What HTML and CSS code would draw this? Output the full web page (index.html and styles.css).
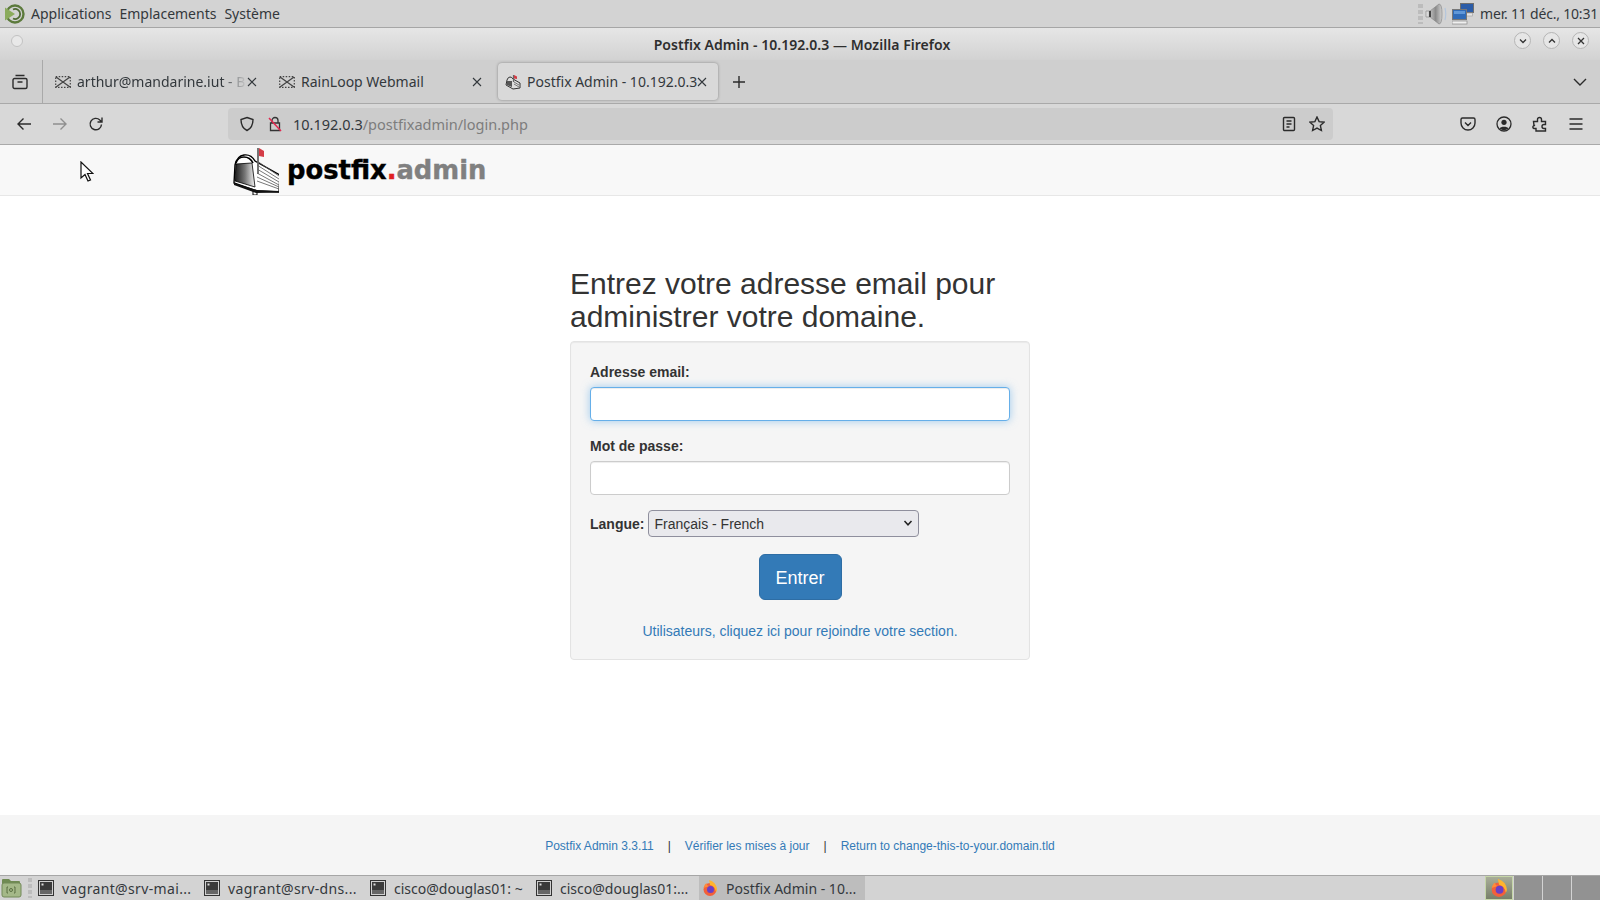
FILE: index.html
```html
<!DOCTYPE html>
<html lang="fr">
<head>
  <meta charset="utf-8">
  <title>Postfix Admin - 10.192.0.3</title>
  <link rel="stylesheet" href="styles.css">
</head>
<body>
  <div class="desktop">
    <!-- Top panel -->
    <div class="top-panel">
      <svg class="mate-logo" width="24" height="24" viewBox="0 0 24 24">
        <circle cx="12" cy="12" r="8.500" fill="none" stroke="#5c7a3c" stroke-width="2.400"/>
        <path d="M10 7.500a5 5 0 1 1 0 9" fill="none" stroke="#4f6a34" stroke-width="1.800"/>
        <path d="M2 5.500 12 12 2 18.500z" fill="#8bab5c"/>
      </svg>
      <span class="panel-menu">Applications</span>
      <span class="panel-menu">Emplacements</span>
      <span class="panel-menu">Système</span>
      <div class="panel-tray">
        <span class="tray-grip"></span>
        <svg width="22" height="24" viewBox="0 0 22 24">
          <defs>
            <linearGradient id="cone" x1="0" x2="1" y1="0" y2="0">
              <stop offset="0" stop-color="#e8e8e8"/>
              <stop offset="0.600" stop-color="#8a8a8a"/>
              <stop offset="1" stop-color="#d0d0d0"/>
            </linearGradient>
          </defs>
          <path d="M1 9h4l9-7q3 0 3 10t-3 10l-9-7H1z" fill="url(#cone)" stroke="#8a8a8a" stroke-width=".7"/>
          <path d="M5 9v6" stroke="#444" stroke-width="2"/>
          <path d="M20 6q1.500 6 0 12" fill="none" stroke="#b4c6dc" stroke-width="1.200"/>
        </svg>
        <svg class="tray-net" width="22" height="24" viewBox="0 0 22 24">
          <rect x="8.500" y="1.500" width="13" height="9" fill="#2c5da8" stroke="#6f6f6f"/>
          <rect x="9.500" y="11" width="11" height="3" fill="#e6e6e6" stroke="#999" stroke-width=".6"/>
          <rect x=".5" y="7.500" width="14" height="10" fill="#2f6bb8" stroke="#777"/>
          <path d="M2 9h11v3H2z" fill="#5f97d8"/>
          <rect x="0" y="19" width="15" height="3" fill="#f0f0f0" stroke="#888" stroke-width=".7"/>
        </svg>
        <span class="panel-clock">mer. 11 déc., 10:31</span>
      </div>
    </div>

    <!-- Window title -->
    <div class="title-bar">
      <span class="win-dot"></span>
      <span class="win-title">Postfix Admin - 10.192.0.3 — Mozilla Firefox</span>
      <div class="win-buttons">
        <span class="win-btn"><svg width="10" height="10" viewBox="0 0 10 10"><path d="M2 3.500 5 6.500 8 3.500" class="win-ico"/></svg></span>
        <span class="win-btn"><svg width="10" height="10" viewBox="0 0 10 10"><path d="M2 6.500 5 3.500 8 6.500" class="win-ico"/></svg></span>
        <span class="win-btn"><svg width="10" height="10" viewBox="0 0 10 10"><path d="M2 2 8 8M8 2 2 8" class="win-ico"/></svg></span>
      </div>
    </div>

    <!-- Tabs -->
    <div class="tab-bar">
      <div class="tab-view">
        <svg width="16" height="16" viewBox="0 0 16 16" class="ico"><path d="M3.500 1.500h9M1 6a1.500 1.500 0 0 1 1.500-1.500h11A1.500 1.500 0 0 1 15 6v7a1.500 1.500 0 0 1-1.500 1.500h-11A1.500 1.500 0 0 1 1 13zM5.500 8h5"/></svg>
      </div>
      <div class="tab tab-one">
        <svg class="tab-fav" width="16" height="16" viewBox="0 0 16 16"><path d="M1 3 15 13M15 3 1 13" stroke="#444" stroke-width="1.300" fill="none"/><rect x=".7" y="2.700" width="14.600" height="10.600" fill="none" stroke="#444" stroke-width="1.200" stroke-dasharray="1.500 1.500"/></svg>
        <span class="tab-label tab-fade">arthur@mandarine.iut - B</span>
        <svg class="tab-x" width="10" height="10" viewBox="0 0 10 10"><path d="M1 1 9 9M9 1 1 9"/></svg>
      </div>
      <div class="tab tab-two">
        <svg class="tab-fav" width="16" height="16" viewBox="0 0 16 16"><path d="M1 3 15 13M15 3 1 13" stroke="#444" stroke-width="1.300" fill="none"/><rect x=".7" y="2.700" width="14.600" height="10.600" fill="none" stroke="#444" stroke-width="1.200" stroke-dasharray="1.500 1.500"/></svg>
        <span class="tab-label">RainLoop Webmail</span>
        <svg class="tab-x" width="10" height="10" viewBox="0 0 10 10"><path d="M1 1 9 9M9 1 1 9"/></svg>
      </div>
      <div class="tab tab-active">
        <svg class="tab-fav" width="16" height="16" viewBox="0 0 16 16">
          <path d="M1 11 2 6q1-3 3-3t3 2l7 4v5l-7 1z" fill="#ddd" stroke="#333"/>
          <path d="M2 7h5v6l-5-2z" fill="#555"/>
          <path d="M8.500 1v7" stroke="#666" stroke-width="1.200"/>
          <path d="M9 1l3 1.500V5L9 4.500z" fill="#d43c46"/>
          <path d="M9 8l5 3M9 10l5 3" stroke="#777"/>
        </svg>
        <span class="tab-label">Postfix Admin - 10.192.0.3</span>
        <svg class="tab-x" width="10" height="10" viewBox="0 0 10 10"><path d="M1 1 9 9M9 1 1 9"/></svg>
      </div>
      <svg class="tab-new ico" width="16" height="16" viewBox="0 0 16 16"><path d="M8 2v12M2 8h12"/></svg>
      <svg class="tab-list ico" width="16" height="16" viewBox="0 0 16 16"><path d="M2 5l6 6 6-6"/></svg>
    </div>

    <!-- Nav toolbar -->
    <div class="nav-bar">
      <svg class="nav-btn ico" width="16" height="16" viewBox="0 0 16 16"><path d="M15 8H2M7.500 2.500 2 8l5.500 5.500"/></svg>
      <svg class="nav-btn ico ico-off" width="16" height="16" viewBox="0 0 16 16"><path d="M1 8h13M8.500 2.500 14 8l-5.500 5.500"/></svg>
      <svg class="nav-btn ico" width="16" height="16" viewBox="0 0 16 16"><path d="M13.500 8.500A5.700 5.700 0 1 1 11.800 4L14 6M14 1.500V6H9.500"/></svg>
      <div class="url-bar">
        <svg class="url-shield ico" width="16" height="16" viewBox="0 0 16 16"><path d="M8 1.500 14 3.500c0 5.500-1.800 9-6 11-4.200-2-6-5.500-6-11z"/></svg>
        <svg class="url-lock" width="16" height="16" viewBox="0 0 16 16">
          <path d="M5 7V4.500a3 3 0 0 1 6 0V7M3.500 7h9v7.500h-9z" fill="none" stroke="#333" stroke-width="1.300"/>
          <path d="M2 2 14 15" stroke="#e22850" stroke-width="1.500"/>
        </svg>
        <span class="url-text"><span class="url-host">10.192.0.3</span>/postfixadmin/login.php</span>
        <svg class="url-reader ico" width="16" height="16" viewBox="0 0 16 16"><path d="M3.500 1.500h9a1 1 0 0 1 1 1v11a1 1 0 0 1-1 1h-9a1 1 0 0 1-1-1v-11a1 1 0 0 1 1-1zM5.500 5h5M5.500 8h5M5.500 11h3"/></svg>
        <svg class="url-star ico" width="16" height="16" viewBox="0 0 16 16"><path d="M8 1l2.100 4.600 5 .6-3.700 3.400 1 4.900L8 12.100l-4.400 2.400 1-4.900L.9 6.200l5-.6z"/></svg>
      </div>
      <div class="nav-right">
        <svg class="ico" width="16" height="16" viewBox="0 0 16 16"><path d="M2.500 2h11A1.500 1.500 0 0 1 15 3.500V7a7 7 0 0 1-14 0V3.500A1.500 1.500 0 0 1 2.500 2zM5 6.500 8 9.500l3-3"/></svg>
        <svg width="16" height="16" viewBox="0 0 16 16"><circle cx="8" cy="8" r="7" fill="none" stroke="#2b2b2b" stroke-width="1.300"/><circle cx="8" cy="6.300" r="2.600" fill="#2b2b2b"/><path d="M3.500 12.500c1-2.500 8-2.500 9 0q-4.500 3.500-9 0z" fill="#2b2b2b"/></svg>
        <svg class="ico" width="16" height="16" viewBox="0 0 16 16"><path d="M1.500 5.500h4V3.500a2 2 0 0 1 4 0v2h4v3h-1.500a2 2 0 0 0 0 4h1.500v2.500H4v-2.500H2a1.500 1.500 0 0 1 1-3H2z"/></svg>
        <svg class="ico" width="16" height="16" viewBox="0 0 16 16"><path d="M1.500 3h13M1.500 8h13M1.500 13h13"/></svg>
      </div>
    </div>

    <!-- Page content -->
    <div class="page">
      <nav class="site-nav">
        <a class="brand">
          <svg class="brand-box" width="50" height="50" viewBox="5 2 50 50">
            <defs>
              <linearGradient id="boxfade" x1="0" x2="1" y1="0" y2="0">
                <stop offset="0" stop-color="#1c1c1c"/>
                <stop offset="0.500" stop-color="#777"/>
                <stop offset="1" stop-color="#f4f4f4"/>
              </linearGradient>
            </defs>
            <path d="M29 44h4v8h-4z" fill="#fff" stroke="#000"/>
            <path d="M10 40 11 22Q13 13 20 12 27 11 31 18L56 32 55 49 33 48z" fill="#fff" stroke="#000" stroke-width="1.400"/>
            <path d="M12 21 28 20 31 44 11 38z" fill="url(#boxfade)" stroke="#000" stroke-width=".8"/>
            <path d="M12 20Q14 14 20 14 26 14 29 20" fill="none" stroke="#000" stroke-width="1.600"/>
            <path d="M33 18 55 33M33 22 55 36M33 26 55 39M33 30 55 42M33 34 55 44M33 38 55 46" stroke="#555" stroke-width=".8"/>
            <path d="M10 40 33 47 55 48 55 49.500 32 50 10 42z" fill="#111"/>
            <path d="M34 5V31" stroke="#666" stroke-width="1.800"/>
            <path d="M35 5 40 8V14L35 13z" fill="#d43c46"/>
          </svg>
          <span class="brand-text">postfix<span class="brand-dot">.</span><span class="brand-admin">admin</span></span>
        </a>
      </nav>

      <main class="login">
        <h2>Entrez votre adresse email pour administrer votre domaine.</h2>
        <form class="well">
          <label class="field-label" for="email">Adresse email:</label>
          <input class="field field-focus" id="email" type="text">
          <label class="field-label" for="pass">Mot de passe:</label>
          <input class="field" id="pass" type="password">
          <div class="lang-row">
            <label for="lang">Langue:</label>
            <div class="lang-select">
              <select id="lang">
                <option>Français - French</option>
              </select>
              <svg class="lang-arrow" width="10" height="10" viewBox="0 0 10 10"><path d="M1.500 3 5 6.800 8.500 3"/></svg>
            </div>
          </div>
          <div class="submit-row"><button type="button" class="btn-enter">Entrer</button></div>
          <div class="user-link"><a href="#">Utilisateurs, cliquez ici pour rejoindre votre section.</a></div>
        </form>
      </main>

      <footer class="site-footer">
        <a href="#">Postfix Admin 3.3.11</a>
        <span class="sep">|</span>
        <a href="#">Vérifier les mises à jour</a>
        <span class="sep">|</span>
        <a href="#">Return to change-this-to-your.domain.tld</a>
      </footer>
    </div>

    <!-- Bottom panel -->
    <div class="task-bar">
      <svg class="task-folder" width="22" height="22" viewBox="0 0 22 22">
        <path d="M2 3q0-1 1-1h6l2 2h8q1 0 1 1v2H2z" fill="#6f8a52"/>
        <rect x="2" y="6" width="19" height="14" rx="2" fill="#a4b888" stroke="#738a58"/>
        <path d="M8 10h-1v6h1M14 10h1v6h-1" fill="none" stroke="#5a6f42"/>
        <circle cx="11" cy="13" r="1.500" fill="none" stroke="#5a6f42"/>
      </svg>
      <span class="task-grip"></span>
      <div class="task-item task-wide">
        <svg class="term-ico" width="16" height="16" viewBox="0 0 16 16"><rect x=".5" y=".5" width="15" height="15" fill="#d0d0d0" stroke="#333"/><rect x="2" y="2" width="12" height="12" fill="#3a3a3a"/><path d="M3.500 3.500h2v2h-2z" fill="#ddd"/><path d="M2 10h12v4H2z" fill="#666"/></svg>
        <span>vagrant@srv-mai...</span>
      </div>
      <div class="task-item task-wide">
        <svg class="term-ico" width="16" height="16" viewBox="0 0 16 16"><rect x=".5" y=".5" width="15" height="15" fill="#d0d0d0" stroke="#333"/><rect x="2" y="2" width="12" height="12" fill="#3a3a3a"/><path d="M3.500 3.500h2v2h-2z" fill="#ddd"/><path d="M2 10h12v4H2z" fill="#666"/></svg>
        <span>vagrant@srv-dns...</span>
      </div>
      <div class="task-item">
        <svg class="term-ico" width="16" height="16" viewBox="0 0 16 16"><rect x=".5" y=".5" width="15" height="15" fill="#d0d0d0" stroke="#333"/><rect x="2" y="2" width="12" height="12" fill="#3a3a3a"/><path d="M3.500 3.500h2v2h-2z" fill="#ddd"/><path d="M2 10h12v4H2z" fill="#666"/></svg>
        <span>cisco@douglas01: ~</span>
      </div>
      <div class="task-item task-short">
        <svg class="term-ico" width="16" height="16" viewBox="0 0 16 16"><rect x=".5" y=".5" width="15" height="15" fill="#d0d0d0" stroke="#333"/><rect x="2" y="2" width="12" height="12" fill="#3a3a3a"/><path d="M3.500 3.500h2v2h-2z" fill="#ddd"/><path d="M2 10h12v4H2z" fill="#666"/></svg>
        <span>cisco@douglas01:...</span>
      </div>
      <div class="task-item task-active">
        <svg class="term-ico" width="16" height="16" viewBox="0 0 16 16">
          <circle cx="8" cy="9.500" r="6.500" fill="#f2603a"/>
          <path d="M7 0q7 2 8 9 0 2-1 3-1-6-6-7z" fill="#ffb52e"/>
          <path d="M1.500 8q1-4 3-5 0 3 3 3z" fill="#ff8a3a"/>
          <circle cx="8.500" cy="9.500" r="3.500" fill="#6a3fc4"/>
        </svg>
        <span>Postfix Admin - 10...</span>
      </div>
      <div class="workspaces">
        <div class="ws ws-on">
          <svg width="18" height="18" viewBox="0 0 16 16">
            <circle cx="8" cy="9.500" r="6.500" fill="#f2603a"/>
            <path d="M7 0q7 2 8 9 0 2-1 3-1-6-6-7z" fill="#ffb52e"/>
            <path d="M1.500 8q1-4 3-5 0 3 3 3z" fill="#ff8a3a"/>
            <circle cx="8.500" cy="9.500" r="3.500" fill="#6a3fc4"/>
          </svg>
        </div>
        <div class="ws"></div>
        <div class="ws"></div>
        <div class="ws"></div>
      </div>
    </div>

    <!-- Mouse pointer, on top of the page -->
    <svg class="pointer" width="14" height="22" viewBox="0 0 14 22">
      <path d="M1 1v16l4-3.500 3 6.500 2.500-1-3-6.500H13z" fill="#fff" stroke="#111" stroke-width="1.200"/>
    </svg>
  </div>
</body>
</html>
```

FILE: styles.css
```css
/* Basic reset */
* {
  box-sizing: border-box;
  margin: 0;
  padding: 0;
}

body {
  width: 1600px;
  height: 900px;
  overflow: hidden;
  font-family: "Noto Sans", sans-serif;
  color: #2e2e2e;
}

.desktop {
  position: relative;
  display: flex;
  flex-direction: column;
  height: 900px;
}

.ico {
  fill: none;
  stroke: #2b2b2b;
  stroke-width: 1.4;
}

.ico-off {
  stroke: #8f8f8f;
}

/* Top panel */
.top-panel {
  height: 28px;
  flex: none;
  display: flex;
  align-items: center;
  background-color: #d3d3d3;
  border-bottom: 1px solid #a6a6a6;
  font-size: 14px;
  padding-left: 3px;
}

.mate-logo {
  margin-right: 4px;
}

.panel-menu {
  margin-right: 8px;
  color: #33383c;
}

.panel-tray {
  margin-left: auto;
  display: flex;
  align-items: center;
  padding-right: 2px;
}

.tray-grip {
  width: 5px;
  height: 20px;
  margin-right: 2px;
  background: repeating-linear-gradient(#bcbcbc 0 4px, #d3d3d3 4px 6px);
}

.tray-net {
  margin-left: 5px;
  margin-right: 6px;
}

.panel-clock {
  color: #33383c;
  letter-spacing: -0.2px;
}

/* Window title */
.title-bar {
  height: 32px;
  flex: none;
  position: relative;
  display: flex;
  align-items: center;
  justify-content: center;
  padding-left: 4px;
  background: linear-gradient(#e6e6e6, #d2d2d2);
}

.win-title {
  font-size: 14px;
  font-weight: 600;
  letter-spacing: 0.05px;
  color: #2e2e2e;
}

.win-dot {
  position: absolute;
  left: 11px;
  top: 7px;
  width: 12px;
  height: 12px;
  border-radius: 50%;
  background-color: #e8e8e8;
  border: 1px solid #c2c2c2;
}

.win-buttons {
  position: absolute;
  right: 11px;
  top: 4px;
  display: flex;
  gap: 12px;
}

.win-btn {
  width: 17px;
  height: 17px;
  border-radius: 50%;
  border: 1px solid #b5b5b5;
  background-color: #e6e6e6;
  display: flex;
  align-items: center;
  justify-content: center;
}

.win-ico {
  fill: none;
  stroke: #333;
  stroke-width: 1.3;
}

/* Tabs */
.tab-bar {
  height: 44px;
  flex: none;
  display: flex;
  align-items: center;
  background-color: #cfcfcf;
  border-bottom: 1px solid #a9a9a9;
  font-size: 14px;
}

.tab-view {
  width: 43px;
  height: 44px;
  display: flex;
  align-items: center;
  justify-content: center;
  padding-right: 2px;
  border-right: 1px solid #a9a9a9;
}

.tab {
  display: flex;
  align-items: center;
  height: 37px;
  color: #33383c;
}

.tab-one {
  width: 222px;
  padding-left: 12px;
  padding-right: 8px;
}

.tab-two {
  width: 233px;
  padding-left: 14px;
  padding-right: 16px;
}

.tab-active {
  width: 220px;
  padding-left: 7px;
  padding-right: 11px;
  background-color: #d9d9d9;
  border-radius: 4px;
  box-shadow: 0 0 3px rgba(0, 0, 0, 0.35);
}

.tab-fav {
  flex: none;
  margin-right: 6px;
}

.tab-label {
  flex: 1;
  white-space: nowrap;
  overflow: hidden;
}

.tab-fade {
  -webkit-mask-image: linear-gradient(to right, #000 85%, transparent);
  mask-image: linear-gradient(to right, #000 85%, transparent);
}

.tab-x {
  flex: none;
  fill: none;
  stroke: #33383c;
  stroke-width: 1.1;
}

.tab-new {
  margin-left: 13px;
}

.tab-list {
  margin-left: auto;
  margin-right: 12px;
}

/* Nav toolbar */
.nav-bar {
  height: 41px;
  flex: none;
  display: flex;
  align-items: center;
  background-color: #d8d8d8;
  border-bottom: 1px solid #a9a9a9;
  padding-left: 16px;
}

.nav-btn {
  margin-right: 20px;
}

.url-bar {
  width: 1105px;
  height: 32px;
  margin-left: 104px;
  display: flex;
  align-items: center;
  background-color: #cccccc;
  border-radius: 4px;
  padding-left: 11px;
  font-size: 14.5px;
}

.url-shield {
  margin-right: 12px;
}

.url-lock {
  margin-right: 10px;
}

.url-text {
  flex: 1;
  color: #7d7d7d;
}

.url-host {
  color: #33383c;
}

.url-reader {
  margin-right: 12px;
}

.url-star {
  margin-right: 8px;
}

.nav-right {
  margin-left: 127px;
  display: flex;
  gap: 20px;
}

/* Page content */
.page {
  flex: 1;
  display: flex;
  flex-direction: column;
  background-color: #ffffff;
  font-family: "Liberation Sans", Arial, sans-serif;
  font-size: 14px;
  color: #333333;
}

.site-nav {
  height: 51px;
  flex: none;
  background-color: #f8f8f8;
  border-bottom: 1px solid #e7e7e7;
  padding-left: 229px;
}

.brand {
  display: flex;
  align-items: center;
  height: 50px;
}

.brand-box {
  margin-right: 8px;
}

.brand-text {
  font-family: "DejaVu Sans", sans-serif;
  font-weight: 700;
  font-size: 25.8px;
  color: #000000;
  -webkit-text-stroke: 0.4px currentColor;
}

.brand-dot {
  color: #e02020;
}

.brand-admin {
  color: #808080;
}

.login {
  flex: 1;
  width: 460px;
  margin: 0 auto;
  padding-top: 71px;
}

.login h2 {
  font-size: 30px;
  font-weight: 400;
  line-height: 33px;
  margin-bottom: 8px;
}

.well {
  height: 319px;
  background-color: #f5f5f5;
  border: 1px solid #e3e3e3;
  border-radius: 4px;
  padding: 20px 19px 19px;
  box-shadow: inset 0 1px 1px rgba(0, 0, 0, 0.05);
}

.field-label {
  display: block;
  font-weight: 700;
  line-height: 20px;
  margin-bottom: 5px;
}

.field {
  display: block;
  width: 100%;
  height: 34px;
  margin-bottom: 15px;
  border: 1px solid #cccccc;
  border-radius: 4px;
  background-color: #ffffff;
  box-shadow: inset 0 1px 1px rgba(0, 0, 0, 0.075);
}

.field-focus {
  border-color: #66afe9;
  box-shadow: inset 0 1px 1px rgba(0, 0, 0, 0.075), 0 0 8px rgba(102, 175, 233, 0.6);
}

.lang-row {
  display: flex;
  align-items: center;
  height: 27px;
  margin-bottom: 17px;
}

.lang-row label {
  font-weight: 700;
  margin-right: 4px;
}

.lang-select {
  position: relative;
  display: flex;
}

.lang-select select {
  width: 271px;
  height: 27px;
  appearance: none;
  font-family: "Liberation Sans", Arial, sans-serif;
  font-size: 14px;
  color: #333333;
  padding-left: 5px;
  background-color: #e9e9ed;
  border: 1px solid #8f8f9d;
  border-radius: 4px;
}

.lang-arrow {
  position: absolute;
  right: 6px;
  top: 8px;
  fill: none;
  stroke: #222;
  stroke-width: 1.5;
}

.submit-row {
  text-align: center;
  margin-bottom: 21px;
}

.btn-enter {
  width: 83px;
  height: 46px;
  padding-top: 3px;
  font-family: "Liberation Sans", Arial, sans-serif;
  font-size: 18px;
  color: #ffffff;
  background-color: #337ab7;
  border: 1px solid #2e6da4;
  border-radius: 6px;
}

.user-link {
  text-align: center;
  line-height: 20px;
}

a {
  color: #337ab7;
  text-decoration: none;
}

.site-footer {
  height: 60px;
  flex: none;
  display: flex;
  align-items: center;
  justify-content: center;
  gap: 14px;
  padding-top: 2px;
  background-color: #f5f5f5;
  font-size: 12px;
}

/* Bottom panel */
.task-bar {
  height: 25px;
  flex: none;
  display: flex;
  align-items: center;
  background-color: #d3d3d3;
  border-top: 1px solid #a6a6a6;
  font-size: 14px;
  color: #33383c;
}

.task-folder {
  flex: none;
}

.task-grip {
  width: 4px;
  height: 20px;
  margin: 0 6px 0 6px;
  background: repeating-linear-gradient(#bcbcbc 0 4px, #d3d3d3 4px 6px);
}

.task-item {
  width: 166px;
  height: 24px;
  display: flex;
  align-items: center;
  white-space: nowrap;
  overflow: hidden;
}

.task-wide {
  letter-spacing: 0.35px;
}

.task-short {
  width: 163px;
}

.term-ico {
  flex: none;
  margin-right: 8px;
}

.task-active {
  width: 166px;
  padding-left: 3px;
  background-color: #bdbdbd;
}

.workspaces {
  margin-left: auto;
  display: flex;
  gap: 1px;
  height: 24px;
}

.ws {
  width: 28px;
  background-color: #929292;
}

.ws-on {
  display: flex;
  align-items: center;
  justify-content: center;
  background: linear-gradient(#a8ad98, #78806a);
  border: 1px solid #c5d6a8;
}

/* Mouse pointer */
.pointer {
  position: absolute;
  left: 80px;
  top: 161px;
}
```
